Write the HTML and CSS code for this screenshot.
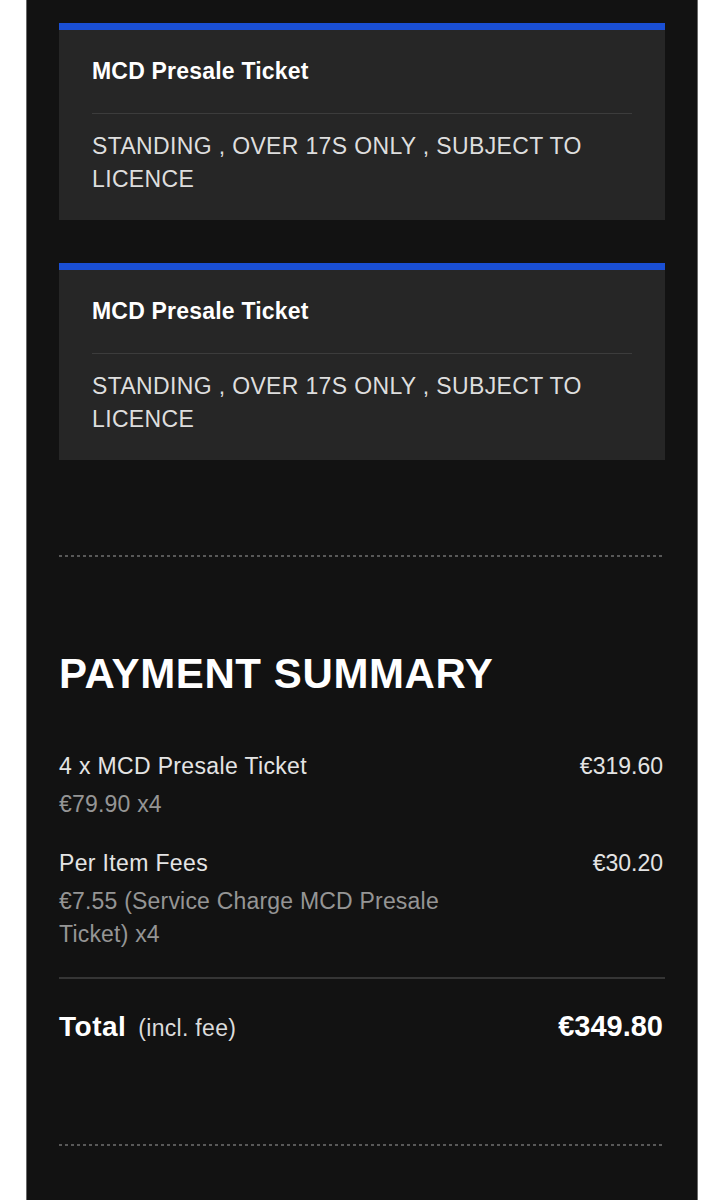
FILE: index.html
```html
<!DOCTYPE html>
<html lang="en">
<head>
<meta charset="utf-8">
<title>Payment Summary</title>
<link rel="stylesheet" href="styles.css">
</head>
<body>
<div class="panel">
  <section class="tickets">
    <div class="ticket">
      <h3 class="ticket-title">MCD Presale Ticket</h3>
      <p class="ticket-desc">STANDING , OVER 17S ONLY , SUBJECT TO LICENCE</p>
    </div>
    <div class="ticket">
      <h3 class="ticket-title">MCD Presale Ticket</h3>
      <p class="ticket-desc">STANDING , OVER 17S ONLY , SUBJECT TO LICENCE</p>
    </div>
  </section>

  <div class="dots dots-top"></div>

  <section class="summary">
    <h2 class="summary-title">PAYMENT SUMMARY</h2>
    <div class="line">
      <div class="line-info">
        <div class="line-name">4 x MCD Presale Ticket</div>
        <div class="line-detail">€79.90 x4</div>
      </div>
      <div class="line-amount">€319.60</div>
    </div>
    <div class="line line-second">
      <div class="line-info">
        <div class="line-name">Per Item Fees</div>
        <div class="line-detail">€7.55 (Service Charge MCD Presale Ticket) x4</div>
      </div>
      <div class="line-amount">€30.20</div>
    </div>
    <div class="total">
      <div class="total-label"><span class="total-word">Total</span><span class="total-note">(incl. fee)</span></div>
      <div class="total-amount">€349.80</div>
    </div>
  </section>

  <div class="dots dots-bottom"></div>
</div>
</body>
</html>
```

FILE: styles.css
```css
html, body {
  margin: 0;
  padding: 0;
  background: #ffffff;
}

body {
  font-family: "Liberation Sans", Arial, Helvetica, sans-serif;
}

.panel {
  width: 672px;
  margin: 0 26px;
  min-height: 1200px;
  box-sizing: border-box;
  background: #121212;
  border-left: 1px solid #6a6a6a;
  border-right: 1px solid #6a6a6a;
  padding: 23px 32px 0 32px;
}

.tickets {
  display: flex;
  flex-direction: column;
  gap: 43px;
}

.ticket {
  background: #262626;
  border-top: 7px solid #1a4fd4;
  padding: 0 33px 24px 33px;
}

.ticket-title {
  margin: 0;
  padding: 25px 0;
  font-size: 23px;
  line-height: 33px;
  font-weight: 700;
  color: #ffffff;
  letter-spacing: 0.2px;
  border-bottom: 1px solid #3c3c3c;
}

.ticket-desc {
  margin: 0;
  padding-top: 16px;
  font-size: 23px;
  line-height: 33px;
  color: #dedede;
  letter-spacing: 0.35px;
}

.dots {
  height: 2px;
  background-image: linear-gradient(to right, #585858 50%, transparent 50%);
  background-size: 6px 2px;
  background-repeat: repeat-x;
}

.dots-top {
  margin-top: 95px;
}

.dots-bottom {
  margin-top: 96px;
}

.summary-title {
  margin: 92px 0 0 0;
  font-size: 42px;
  line-height: 50px;
  font-weight: 700;
  color: #ffffff;
  letter-spacing: 0.6px;
}

.line {
  display: flex;
  justify-content: space-between;
  align-items: flex-start;
  margin-top: 51px;
}

.line-second {
  margin-top: 26px;
}

.line-info {
  flex: 0 1 70%;
}

.line-name {
  font-size: 23px;
  line-height: 33px;
  color: #e4e4e4;
  letter-spacing: 0.35px;
}

.line-detail {
  margin-top: 5px;
  font-size: 23px;
  line-height: 33px;
  color: #959595;
  letter-spacing: 0.2px;
}

.line-amount {
  font-size: 23px;
  line-height: 33px;
  color: #e4e4e4;
  padding-right: 2px;
}

.total {
  margin-top: 26px;
  border-top: 2px solid #353535;
  padding-top: 27px;
  display: flex;
  justify-content: space-between;
  align-items: baseline;
}

.total-label {
  display: flex;
  align-items: baseline;
  gap: 12px;
}

.total-word {
  font-size: 28px;
  line-height: 40px;
  font-weight: 700;
  color: #ffffff;
  letter-spacing: 0.5px;
}

.total-note {
  font-size: 23px;
  line-height: 40px;
  color: #dcdcdc;
  letter-spacing: 0.3px;
}

.total-amount {
  font-size: 29px;
  line-height: 40px;
  font-weight: 700;
  color: #ffffff;
  padding-right: 2px;
}
```
